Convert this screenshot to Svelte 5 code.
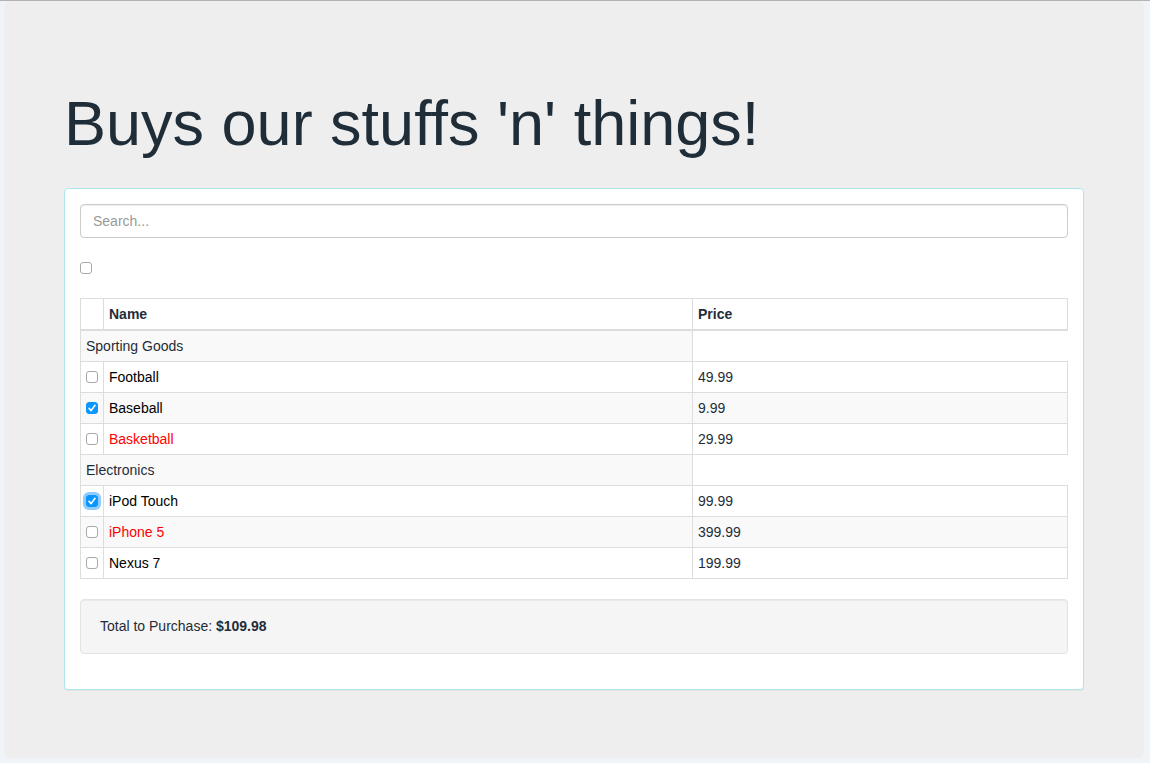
<script>
  let products = $state([
    { category: 'Sporting Goods', name: 'Football', price: '49.99', stocked: true, picked: false },
    { category: 'Sporting Goods', name: 'Baseball', price: '9.99', stocked: true, picked: true },
    { category: 'Sporting Goods', name: 'Basketball', price: '29.99', stocked: false, picked: false },
    { category: 'Electronics', name: 'iPod Touch', price: '99.99', stocked: true, picked: true },
    { category: 'Electronics', name: 'iPhone 5', price: '399.99', stocked: false, picked: false },
    { category: 'Electronics', name: 'Nexus 7', price: '199.99', stocked: true, picked: false },
  ]);
  let query = $state('');
  let stockedOnly = $state(false);
  let active = $state('iPod Touch');

  let visible = $derived(
    products.filter(
      (p) => p.name.toLowerCase().includes(query.toLowerCase()) && (p.stocked || !stockedOnly)
    )
  );
  let categories = $derived([...new Set(visible.map((p) => p.category))]);
  let total = $derived(
    products.reduce((sum, p) => sum + (p.picked ? Number(p.price) : 0), 0).toFixed(2)
  );
</script>

<main class="page">
  <div class="jumbotron">
    <h1>Buys our stuffs 'n' things!</h1>

    <section class="panel">
      <input class="search" type="text" placeholder="Search..." aria-label="Search" bind:value={query} />

      <div class="filter">
        <input class="check" type="checkbox" aria-label="In stock only" bind:checked={stockedOnly} />
      </div>

      <table>
        <colgroup>
          <col class="pick" />
          <col />
          <col class="cost" />
        </colgroup>
        <thead>
          <tr><th></th><th>Name</th><th>Price</th></tr>
        </thead>
        <tbody>
          {#each categories as category}
            <tr><td colspan="2">{category}</td></tr>
            {#each visible.filter((p) => p.category === category) as product (product.name)}
              <tr>
                <td>
                  <input
                    class="check"
                    class:active={active === product.name}
                    type="checkbox"
                    aria-label={product.name}
                    bind:checked={product.picked}
                    onfocus={() => (active = product.name)}
                  />
                </td>
                <td class="name" class:missing={!product.stocked}>{product.name}</td>
                <td>{product.price}</td>
              </tr>
            {/each}
          {/each}
        </tbody>
      </table>

      <div class="well">Total to Purchase: <strong>${total}</strong></div>
    </section>
  </div>
</main>

<style>
  :global(body) {
    background: #f0f4f8;
  }

  .page,
  .page * {
    box-sizing: border-box;
  }

  .page {
    padding: 0 6px 5px 4px;
    border-top: 1px solid #b3b1b3;
    color: #1f2d38;
    font: 14px/20px "Liberation Sans", Arial, sans-serif;
  }

  .jumbotron {
    padding: 88px 60px 68px;
    border-radius: 6px;
    background: #eee;
  }

  h1 {
    margin: 0 0 30px;
    font-size: 63px;
    font-weight: 400;
    line-height: 69px;
  }

  .panel {
    padding: 15px 15px 35px;
    border: 1px solid #abe7ed;
    border-radius: 4px;
    background: #fff;
    box-shadow: 0 1px 1px rgba(0, 0, 0, 0.05);
  }

  .search {
    display: block;
    width: 100%;
    height: 34px;
    padding: 6px 12px;
    border: 1px solid #ccc;
    border-radius: 4px;
    background: #fff;
    box-shadow: inset 0 1px 1px rgba(0, 0, 0, 0.075);
    color: #555;
    font: inherit;
  }

  .search::placeholder {
    color: #999;
    opacity: 1;
  }

  .filter {
    padding: 24px 0;
  }

  .check {
    display: block;
    width: 12px;
    height: 12px;
    margin: 0;
    appearance: none;
    border: 1px solid #a9a9a9;
    border-radius: 3px;
    background: #fff;
  }

  .check:checked {
    border-color: #0a95ff;
    background: #0a95ff
      url("data:image/svg+xml,%3Csvg xmlns='http://www.w3.org/2000/svg' viewBox='0 0 10 10'%3E%3Cpath d='M2 5.3 4.1 7.6 8 2.3' fill='none' stroke='white' stroke-width='1.6' stroke-linecap='round' stroke-linejoin='round'/%3E%3C/svg%3E")
      center / 10px 10px no-repeat;
  }

  .check:focus {
    outline: none;
  }

  .check.active {
    box-shadow: 0 0 0 3px #8fccfa;
  }

  table {
    width: 100%;
    margin-bottom: 20px;
    border-collapse: collapse;
    table-layout: fixed;
  }

  .pick {
    width: 23px;
  }

  .cost {
    width: 38%;
  }

  th,
  td {
    height: 31px;
    padding: 5px;
    border: 1px solid #ddd;
    line-height: 20px;
    text-align: left;
  }

  th {
    padding-bottom: 4px;
    border-bottom-width: 2px;
  }

  tbody tr:nth-child(odd) td {
    background: #f9f9f9;
  }

  .name {
    color: #000;
  }

  .missing {
    color: #f00;
  }

  .well {
    padding: 19px;
    border: 1px solid #e3e3e3;
    border-radius: 4px;
    background: #f5f5f5;
    box-shadow: inset 0 1px 1px rgba(0, 0, 0, 0.05);
    line-height: 15px;
  }
</style>
